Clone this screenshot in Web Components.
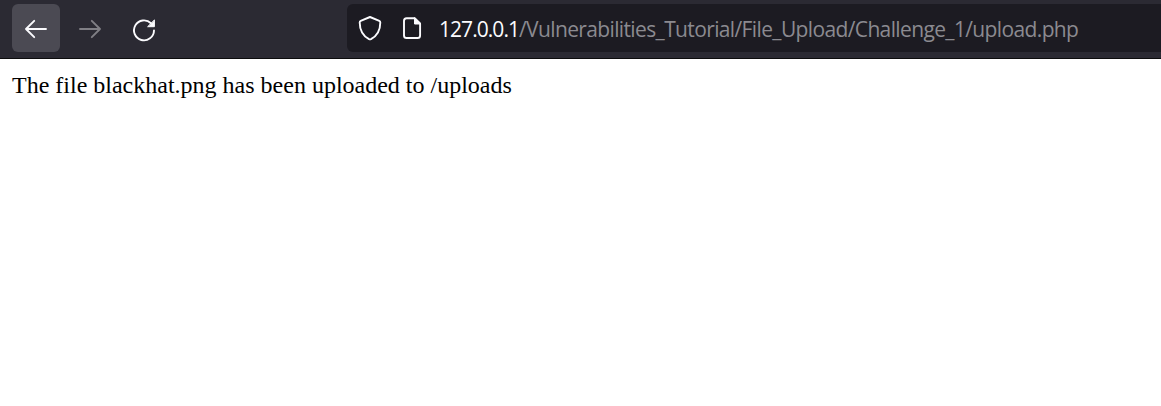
<!DOCTYPE html>
<html lang="en">
<head>
<meta charset="utf-8">
<title>upload.php</title>
<style>
html, body { margin: 0; height: 100%; background: #fff; overflow: hidden; }
</style>
</head>
<body>
<browser-window>
  <browser-toolbar slot="toolbar">
    <nav-button active icon="back"></nav-button>
    <nav-button disabled icon="forward"></nav-button>
    <nav-button icon="reload"></nav-button>
    <address-bar slot="address"><span slot="host">127.0.0.1</span><span slot="path">/Vulnerabilities_Tutorial/File_Upload/Challenge_1/upload.php</span></address-bar>
  </browser-toolbar>
  <page-content>The file blackhat.png has been uploaded to /uploads</page-content>
</browser-window>
<script>
const define = (name, markup, setup) => customElements.define(name, class extends HTMLElement {
  constructor() {
    super();
    this.attachShadow({ mode: "open" }).innerHTML = markup;
  }
  connectedCallback() { if (setup) setup(this); }
});

define("browser-window", `
<style>
:host { display: flex; flex-direction: column; height: 100vh; overflow: hidden; background: #fff; }
</style>
<slot name="toolbar"></slot><slot></slot>`);

define("browser-toolbar", `
<style>
:host { display: flex; box-sizing: border-box; height: 59px; padding: 4px 0 6px 12px; background: #2b2a33; border-bottom: 1px solid #0c0c0d; flex: none; }
nav { display: flex; gap: 6px; width: 335px; flex: none; }
</style>
<nav><slot></slot></nav><slot name="address"></slot>`);

const icons = {
  back: '<path d="M34 25H14M22.200 16.800L14 25l8.200 8.200"/>',
  forward: '<path d="M14 25h20M25.800 16.800L34 25l-8.200 8.200"/>',
  reload: '<path d="M34 26.500a10 10 0 1 1-3-7.300"/><path d="M34.400 16.300v6.400H28z" fill="currentColor" stroke-width="1"/>'
};
define("nav-button", `
<style>
:host { display: block; width: 48px; height: 48px; border-radius: 6px; color: #fbfbfe; }
:host([active]) { background: #4b4a53; }
:host([disabled]) { color: #807f85; }
svg { display: block; fill: none; stroke: currentColor; stroke-width: 1.9; stroke-linecap: round; stroke-linejoin: round; }
</style>
<svg width="48" height="48" viewBox="0 0 48 48"></svg>`,
el => { el.shadowRoot.querySelector("svg").innerHTML = icons[el.getAttribute("icon")]; });

define("address-bar", `
<style>
:host { display: flex; flex: 1; height: 48px; border-radius: 6px 0 0 6px; background: #1c1b22; overflow: hidden; }
svg { flex: none; fill: none; stroke: #fbfbfe; stroke-width: 1.9; stroke-linejoin: round; stroke-linecap: round; }
.url { display: flex; white-space: pre; font: 21px/48px "Open Sans", "Noto Sans", sans-serif; margin-top: 1px; }
.host { color: #fbfbfe; width: 80px; letter-spacing: -.95px; }
.path { color: #8b8a90; letter-spacing: -.63px; }
</style>
<svg width="92" height="48" viewBox="0 0 92 48">
  <path d="M23 13l9.300 3.900q1 .4 1 1.500c0 7.800-3.200 13.300-9.300 16.700q-1 .5-2 0c-6.100-3.400-9.300-8.900-9.300-16.700q0-1.100 1-1.500z"/>
  <path d="M59.600 14.300h8.400l5.100 5.200v11.900q0 2.600-2.600 2.600H59.600q-2.600 0-2.600-2.600V16.900q0-2.600 2.600-2.600z"/>
  <path d="M67.500 14v6h6z" fill="#fbfbfe" stroke-width="1"/>
</svg>
<div class="url"><span class="host"><slot name="host"></slot></span><span class="path"><slot name="path"></slot></span></div>`);

define("page-content", `
<style>
:host { display: block; padding: 12px; font: 24px/28px "Liberation Serif", serif; color: #000; }
</style>
<slot></slot>`);
</script>
</body>
</html>
